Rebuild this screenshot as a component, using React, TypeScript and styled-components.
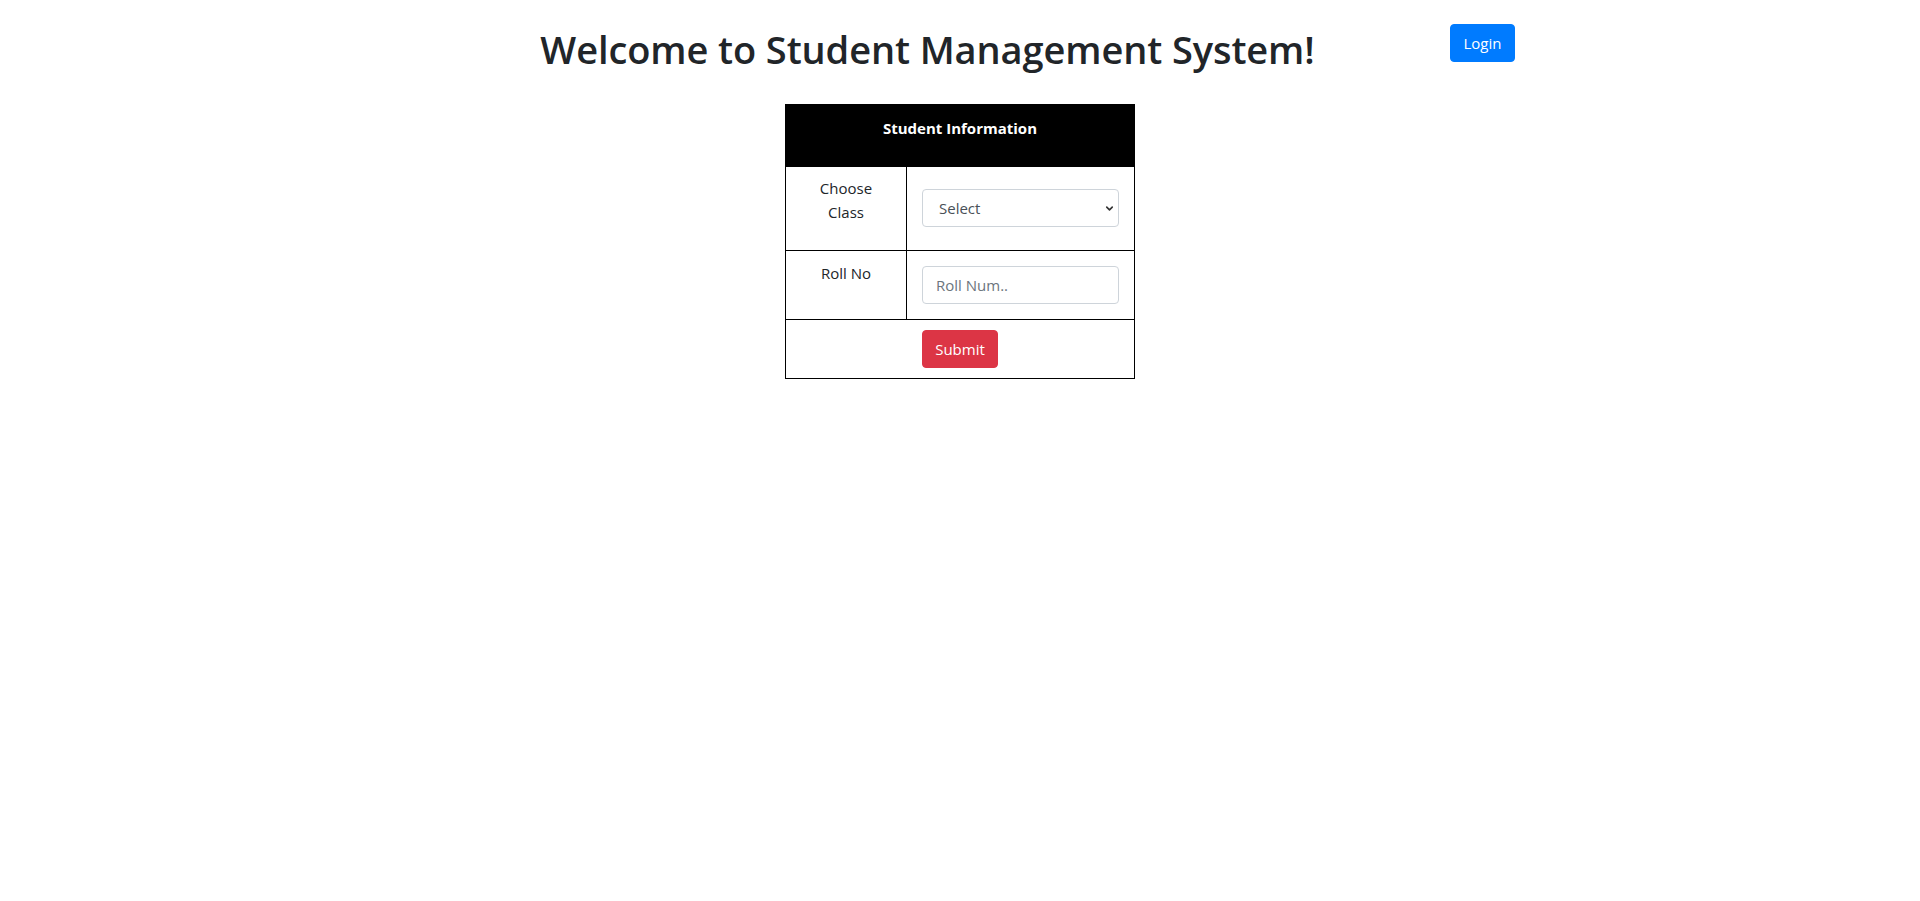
import React from "react";
import styled, { createGlobalStyle } from "styled-components";
import { ChevronDown } from "lucide-react";

const Global = createGlobalStyle`
  html, body { margin: 0; padding: 0; background: #fff; }
  body {
    font-family: "Open Sans", "Noto Sans", "Liberation Sans", sans-serif;
    font-size: 16px;
    line-height: 24px;
    color: #212529;
  }
  * { box-sizing: border-box; }
`;

const Page = styled.div`
  padding-top: 24px;
`;

const Container = styled.div`
  width: 1110px;
  margin: 0 auto;
`;

const TopBar = styled.div`
  display: flex;
  align-items: flex-start;
`;

const Title = styled.h1`
  flex: 1;
  margin: 1px 0 0;
  text-align: center;
  font-size: 38px;
  font-weight: 600;
  line-height: 48px;
  color: #212529;
  letter-spacing: -0.1px;
`;

const Button = styled.button<{ $variant: "primary" | "danger" }>`
  height: 38px;
  padding: 6px 12px;
  border: 1px solid ${(p) => (p.$variant === "primary" ? "#007bff" : "#dc3545")};
  background: ${(p) => (p.$variant === "primary" ? "#007bff" : "#dc3545")};
  color: #fff;
  font-family: inherit;
  font-size: 15px;
  line-height: 24px;
  border-radius: 4px;
  cursor: pointer;
`;

const LoginButton = styled(Button)`
  width: 65px;
`;

const SubmitButton = styled(Button)`
  width: 76px;
`;

const InfoTable = styled.table`
  margin: 31px auto 0;
  width: 350px;
  border-collapse: collapse;
`;

const HeadCell = styled.th`
  height: 62px;
  padding: 11px 12px 26px;
  background: #000;
  color: #fff;
  font-size: 15px;
  font-weight: 700;
  text-align: center;
  vertical-align: top;
  border: 1px solid #000;
`;

const Row = styled.tr<{ $h: number }>`
  height: ${(p) => p.$h}px;
`;

const LabelCell = styled.td<{ $pt: number }>`
  width: 122px;
  padding: ${(p) => p.$pt}px 12px 0;
  text-align: center;
  vertical-align: top;
  border: 1px solid #000;
  font-size: 15px;
`;

const FieldCell = styled.td<{ $pt: number }>`
  padding: ${(p) => p.$pt}px 15px 0 15px;
  vertical-align: top;
  border: 1px solid #000;
`;

const ActionCell = styled.td`
  padding: 10px 12px 0;
  text-align: center;
  vertical-align: top;
  border: 1px solid #000;
`;

const SelectWrap = styled.div`
  position: relative;
  width: 197px;
`;

const Select = styled.select`
  appearance: none;
  -webkit-appearance: none;
  width: 100%;
  height: 38px;
  padding: 6px 24px 6px 16px;
  border: 1px solid #ced4da;
  border-radius: 4px;
  background: #fff;
  color: #495057;
  font-family: inherit;
  font-size: 15px;
  line-height: 24px;
`;

const Chevron = styled(ChevronDown)`
  position: absolute;
  right: 4px;
  top: 14px;
  color: #333;
  pointer-events: none;
`;

const Input = styled.input`
  width: 197px;
  height: 38px;
  padding: 6px 13px;
  border: 1px solid #ced4da;
  border-radius: 4px;
  color: #495057;
  font-family: inherit;
  font-size: 15px;
  line-height: 24px;
  &::placeholder { color: #6c757d; }
`;

export default function App() {
  return (
    <Page>
      <Global />
      <Container>
        <TopBar>
          <Title>Welcome to Student Management System!</Title>
          <LoginButton $variant="primary">Login</LoginButton>
        </TopBar>
      </Container>
      <InfoTable>
        <thead>
          <tr>
            <HeadCell colSpan={2}>Student Information</HeadCell>
          </tr>
        </thead>
        <tbody>
          <Row $h={84}>
            <LabelCell $pt={9}>
              Choose
              <br />
              Class
            </LabelCell>
            <FieldCell $pt={22}>
              <SelectWrap>
                <Select defaultValue="">
                  <option value="">Select</option>
                  <option value="1">Class 1</option>
                  <option value="2">Class 2</option>
                </Select>
                <Chevron size={11} strokeWidth={3.5} />
              </SelectWrap>
            </FieldCell>
          </Row>
          <Row $h={69}>
            <LabelCell $pt={10}>Roll No</LabelCell>
            <FieldCell $pt={15}>
              <Input placeholder="Roll Num.." />
            </FieldCell>
          </Row>
          <Row $h={59}>
            <ActionCell colSpan={2}>
              <SubmitButton $variant="danger">Submit</SubmitButton>
            </ActionCell>
          </Row>
        </tbody>
      </InfoTable>
    </Page>
  );
}
